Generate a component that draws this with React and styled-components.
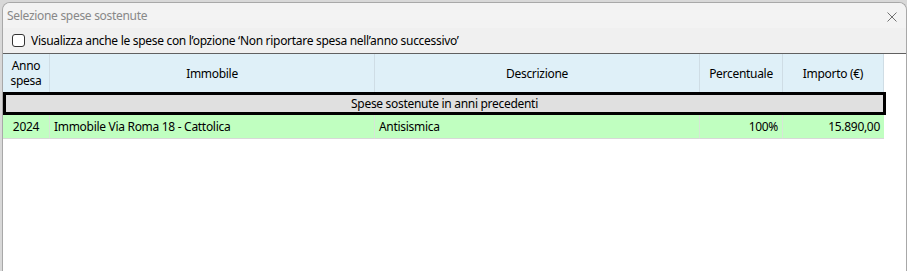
import React from "react";
import styled, { createGlobalStyle } from "styled-components";

const Global = createGlobalStyle`
  html, body { margin: 0; padding: 0; overflow: hidden; background: #d8d8d8; }
  body { font-family: "Noto Sans", "Segoe UI", Arial, sans-serif; font-size: 12px; color: #000; letter-spacing: -0.3px; }
`;

const Window = styled.div`
  margin: 2px 0 0 2px;
  width: 903px;
  height: 300px;
  border: 1px solid #a8a8a8;
  border-bottom: none;
  border-radius: 8px 8px 0 0;
  background: #f0f0f0;
  display: flex;
  flex-direction: column;
  overflow: hidden;
`;

const TitleBar = styled.div`
  height: 25px;
  display: flex;
  align-items: center;
  justify-content: space-between;
  padding: 0 9px 0 4px;
  background: #f3f3f3;
`;

const Title = styled.span`
  color: #888;
  font-size: 12px;
`;

const Close = styled.svg`
  width: 10px;
  height: 10px;
  margin-top: 2px;
`;

const OptionRow = styled.label`
  height: 25px;
  display: flex;
  align-items: center;
  gap: 6px;
  padding-left: 9px;
`;

const Box = styled.span`
  width: 11px;
  height: 11px;
  border: 1px solid #333;
  border-radius: 3px;
  background: #fff;
`;

const OptionText = styled.span`
  font-size: 12px;
`;

const Panel = styled.div`
  flex: 1;
  margin: 0 -1px;
  border: 1px solid #606060;
  border-bottom: none;
  background: #fff;
`;

const Grid = styled.div`
  display: grid;
  grid-template-columns: 47px 325px 325px 83px 101px;
  width: 881px;
`;

const HeadCell = styled.div`
  height: 38px;
  background: #dff0f8;
  border-right: 1px solid #cfdde5;
  box-sizing: border-box;
  display: flex;
  flex-direction: column;
  align-items: center;
  justify-content: center;
  text-align: center;
  font-size: 12px;
  &:last-child { border-right: none; }
`;

const HeadLine = styled.span`
  display: block;
  height: 15px;
  line-height: 15px;
`;

const GroupRow = styled.div`
  grid-column: 1 / -1;
  height: 23px;
  margin-right: -2px;
  box-sizing: border-box;
  border: 3px solid #000;
  background: #e0e0e0;
  display: flex;
  align-items: center;
  justify-content: center;
  font-size: 12px;
`;

const Cell = styled.div`
  height: 24px;
  box-sizing: border-box;
  background: #c0ffc0;
  border-right: 1px solid #d6e6d6;
  border-bottom: 1px solid #d8d8d8;
  display: flex;
  align-items: center;
  padding: 0 4px;
  justify-content: ${p => (p.$align === "right" ? "flex-end" : p.$align === "center" ? "center" : "flex-start")};
  font-size: 12px;
  white-space: nowrap;
  &:last-child { border-right: none; }
`;

export default function App() {
  return (
    <>
      <Global />
      <Window>
        <TitleBar>
          <Title>Selezione spese sostenute</Title>
          <Close viewBox="0 0 10 10">
            <path d="M0.5 0.5 L9.5 9.5 M9.5 0.5 L0.5 9.5" stroke="#707070" strokeWidth="1" fill="none" />
          </Close>
        </TitleBar>
        <OptionRow>
          <Box />
          <OptionText>Visualizza anche le spese con l’opzione ‘Non riportare spesa nell’anno successivo’</OptionText>
        </OptionRow>
        <Panel>
          <Grid>
            <HeadCell><HeadLine>Anno</HeadLine><HeadLine>spesa</HeadLine></HeadCell>
            <HeadCell>Immobile</HeadCell>
            <HeadCell>Descrizione</HeadCell>
            <HeadCell>Percentuale</HeadCell>
            <HeadCell>Importo (€)</HeadCell>
            <GroupRow>Spese sostenute in anni precedenti</GroupRow>
            <Cell $align="center">2024</Cell>
            <Cell>Immobile Via Roma 18 - Cattolica</Cell>
            <Cell>Antisismica</Cell>
            <Cell $align="right">100%</Cell>
            <Cell $align="right">15.890,00</Cell>
          </Grid>
        </Panel>
      </Window>
    </>
  );
}
